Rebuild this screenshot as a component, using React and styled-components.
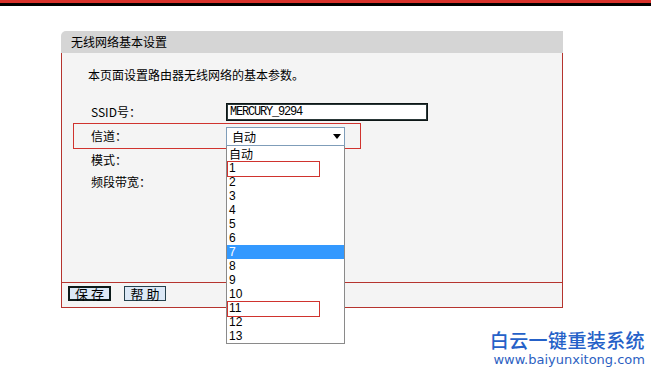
import React from "react";
import styled, { createGlobalStyle } from "styled-components";

const Global = createGlobalStyle`
  html, body { margin: 0; padding: 0; background: #ffffff; }
  body { font-family: "Noto Sans CJK SC", "Liberation Sans", sans-serif; font-size: 12px; color: #000; }
  * { box-sizing: border-box; }
`;

const Page = styled.div`
  width: 651px;
  height: 387px;
  overflow: hidden;
  background: #fff;
`;

const TopBar = styled.div`
  height: 6px;
  border-top: 3px solid #d8322b;
  background: #000;
`;

const Panel = styled.div`
  margin: 25px 0 0 61px;
  width: 502px;
`;

const Header = styled.div`
  height: 22px;
  line-height: 22px;
  background: #d5d5d5;
  border-top-left-radius: 5px;
  padding-left: 10px;
  font-size: 12px;
`;

const Body = styled.div`
  height: 230px;
  background: #f4f4f4;
  border: 1px solid #b5342e;
  border-top: none;
  padding-top: 15px;
`;

const Intro = styled.div`
  padding-left: 26px;
  line-height: 14px;
  height: 14px;
  margin-bottom: 20px;
`;

const Row = styled.div`
  display: flex;
  align-items: center;
  position: relative;
  margin-left: 11px;
  height: ${(p) => p.$h}px;
  width: ${(p) => (p.$marked ? "288px" : "auto")};
  margin-top: ${(p) => p.$mt || 0}px;
  border: 1px solid ${(p) => (p.$marked ? "#d0332e" : "transparent")};
  padding-left: 17px;
`;

const Label = styled.div`
  width: 135px;
  flex: none;
  line-height: 14px;
`;

const TextBox = styled.div`
  width: 202px;
  height: 18px;
  border: 1px solid #0d1616;
  box-shadow: inset 0 0 0 1px #2a3838;
  background: #fff;
  font-family: "Liberation Mono", monospace;
  font-size: 12px;
  letter-spacing: -1.2px;
  line-height: 16px;
  padding-left: 3px;
`;

const SelectWrap = styled.div`
  position: relative;
  width: 119px;
`;

const SelectBox = styled.div`
  height: 19px;
  border: 1px solid #7f9db9;
  background: #fff;
  display: flex;
  align-items: center;
  justify-content: space-between;
  padding: 0 3px 0 5px;
  line-height: 17px;
`;

const DropList = styled.div`
  position: absolute;
  left: 0;
  top: 100%;
  width: 119px;
  background: #fff;
  border: 1px solid #8a8a8a;
  border-top: none;
  padding-top: 1px;
  z-index: 5;
`;

const Option = styled.div`
  position: relative;
  height: 14px;
  line-height: 14px;
  padding-left: 2px;
  font-size: 12px;
  background: ${(p) => (p.$active ? "#3399ff" : "transparent")};
  color: ${(p) => (p.$active ? "#fff" : "#000")};
  font-family: ${(p) => (p.$cjk ? '"Noto Sans CJK SC", sans-serif' : '"Liberation Sans", sans-serif')};
`;

const Mark = styled.div`
  position: absolute;
  left: 0;
  top: 0;
  width: 93px;
  height: 16px;
  border: 1px solid #d0332e;
`;

const ButtonBar = styled.div`
  height: 25px;
  background: #f4f4f4;
  border: 1px solid #b5342e;
  border-top: none;
  display: flex;
  align-items: flex-start;
  gap: 13px;
  padding: 3px 0 0 6px;
`;

const Btn = styled.div`
  height: 15px;
  width: ${(p) => p.$w}px;
  background: #dbe8f6;
  border: ${(p) => (p.$primary ? "2px solid #0c1a1a" : "1px solid #24404c")};
  display: flex;
  align-items: center;
  justify-content: center;
  font-size: 13px;
  line-height: 13px;
  white-space: pre;
`;

const Watermark = styled.div`
  margin-top: 21px;
  padding-right: 6px;
  text-align: right;
  color: #2561c8;
`;

const BrandName = styled.div`
  font-size: 19px;
  line-height: 22px;
  font-weight: 500;
  letter-spacing: 0.4px;
`;

const BrandUrl = styled.div`
  font-family: "DejaVu Sans", sans-serif;
  font-size: 13px;
  line-height: 18px;
  color: #2d5fc2;
`;

const Arrow = () => (
  <svg width="8" height="5" viewBox="0 0 8 5">
    <polygon points="0,0 8,0 4,5" fill="#000" />
  </svg>
);

const options = ["自动", "1", "2", "3", "4", "5", "6", "7", "8", "9", "10", "11", "12", "13"];

export default function App() {
  return (
    <Page>
      <Global />
      <TopBar />
      <Panel>
        <Header>无线网络基本设置</Header>
        <Body>
          <Intro>本页面设置路由器无线网络的基本参数。</Intro>
          <Row $h={20}>
            <Label>SSID号：</Label>
            <TextBox>MERCURY_9294</TextBox>
          </Row>
          <Row $h={26} $mt={1} $marked>
            <Label>信道：</Label>
            <SelectWrap>
              <SelectBox>
                <span>自动</span>
                <Arrow />
              </SelectBox>
              <DropList>
                {options.map((o, i) => (
                  <Option key={o} $active={o === "7"} $cjk={i === 0}>
                    {o}
                    {(o === "1" || o === "11") && <Mark />}
                  </Option>
                ))}
              </DropList>
            </SelectWrap>
          </Row>
          <Row $h={22}>
            <Label>模式：</Label>
          </Row>
          <Row $h={22}>
            <Label>频段带宽：</Label>
          </Row>
        </Body>
        <ButtonBar>
          <Btn $primary $w={43}>保 存</Btn>
          <Btn $w={42}>帮 助</Btn>
        </ButtonBar>
      </Panel>
      <Watermark>
        <BrandName>白云一键重装系统</BrandName>
        <BrandUrl>www.baiyunxitong.com</BrandUrl>
      </Watermark>
    </Page>
  );
}
